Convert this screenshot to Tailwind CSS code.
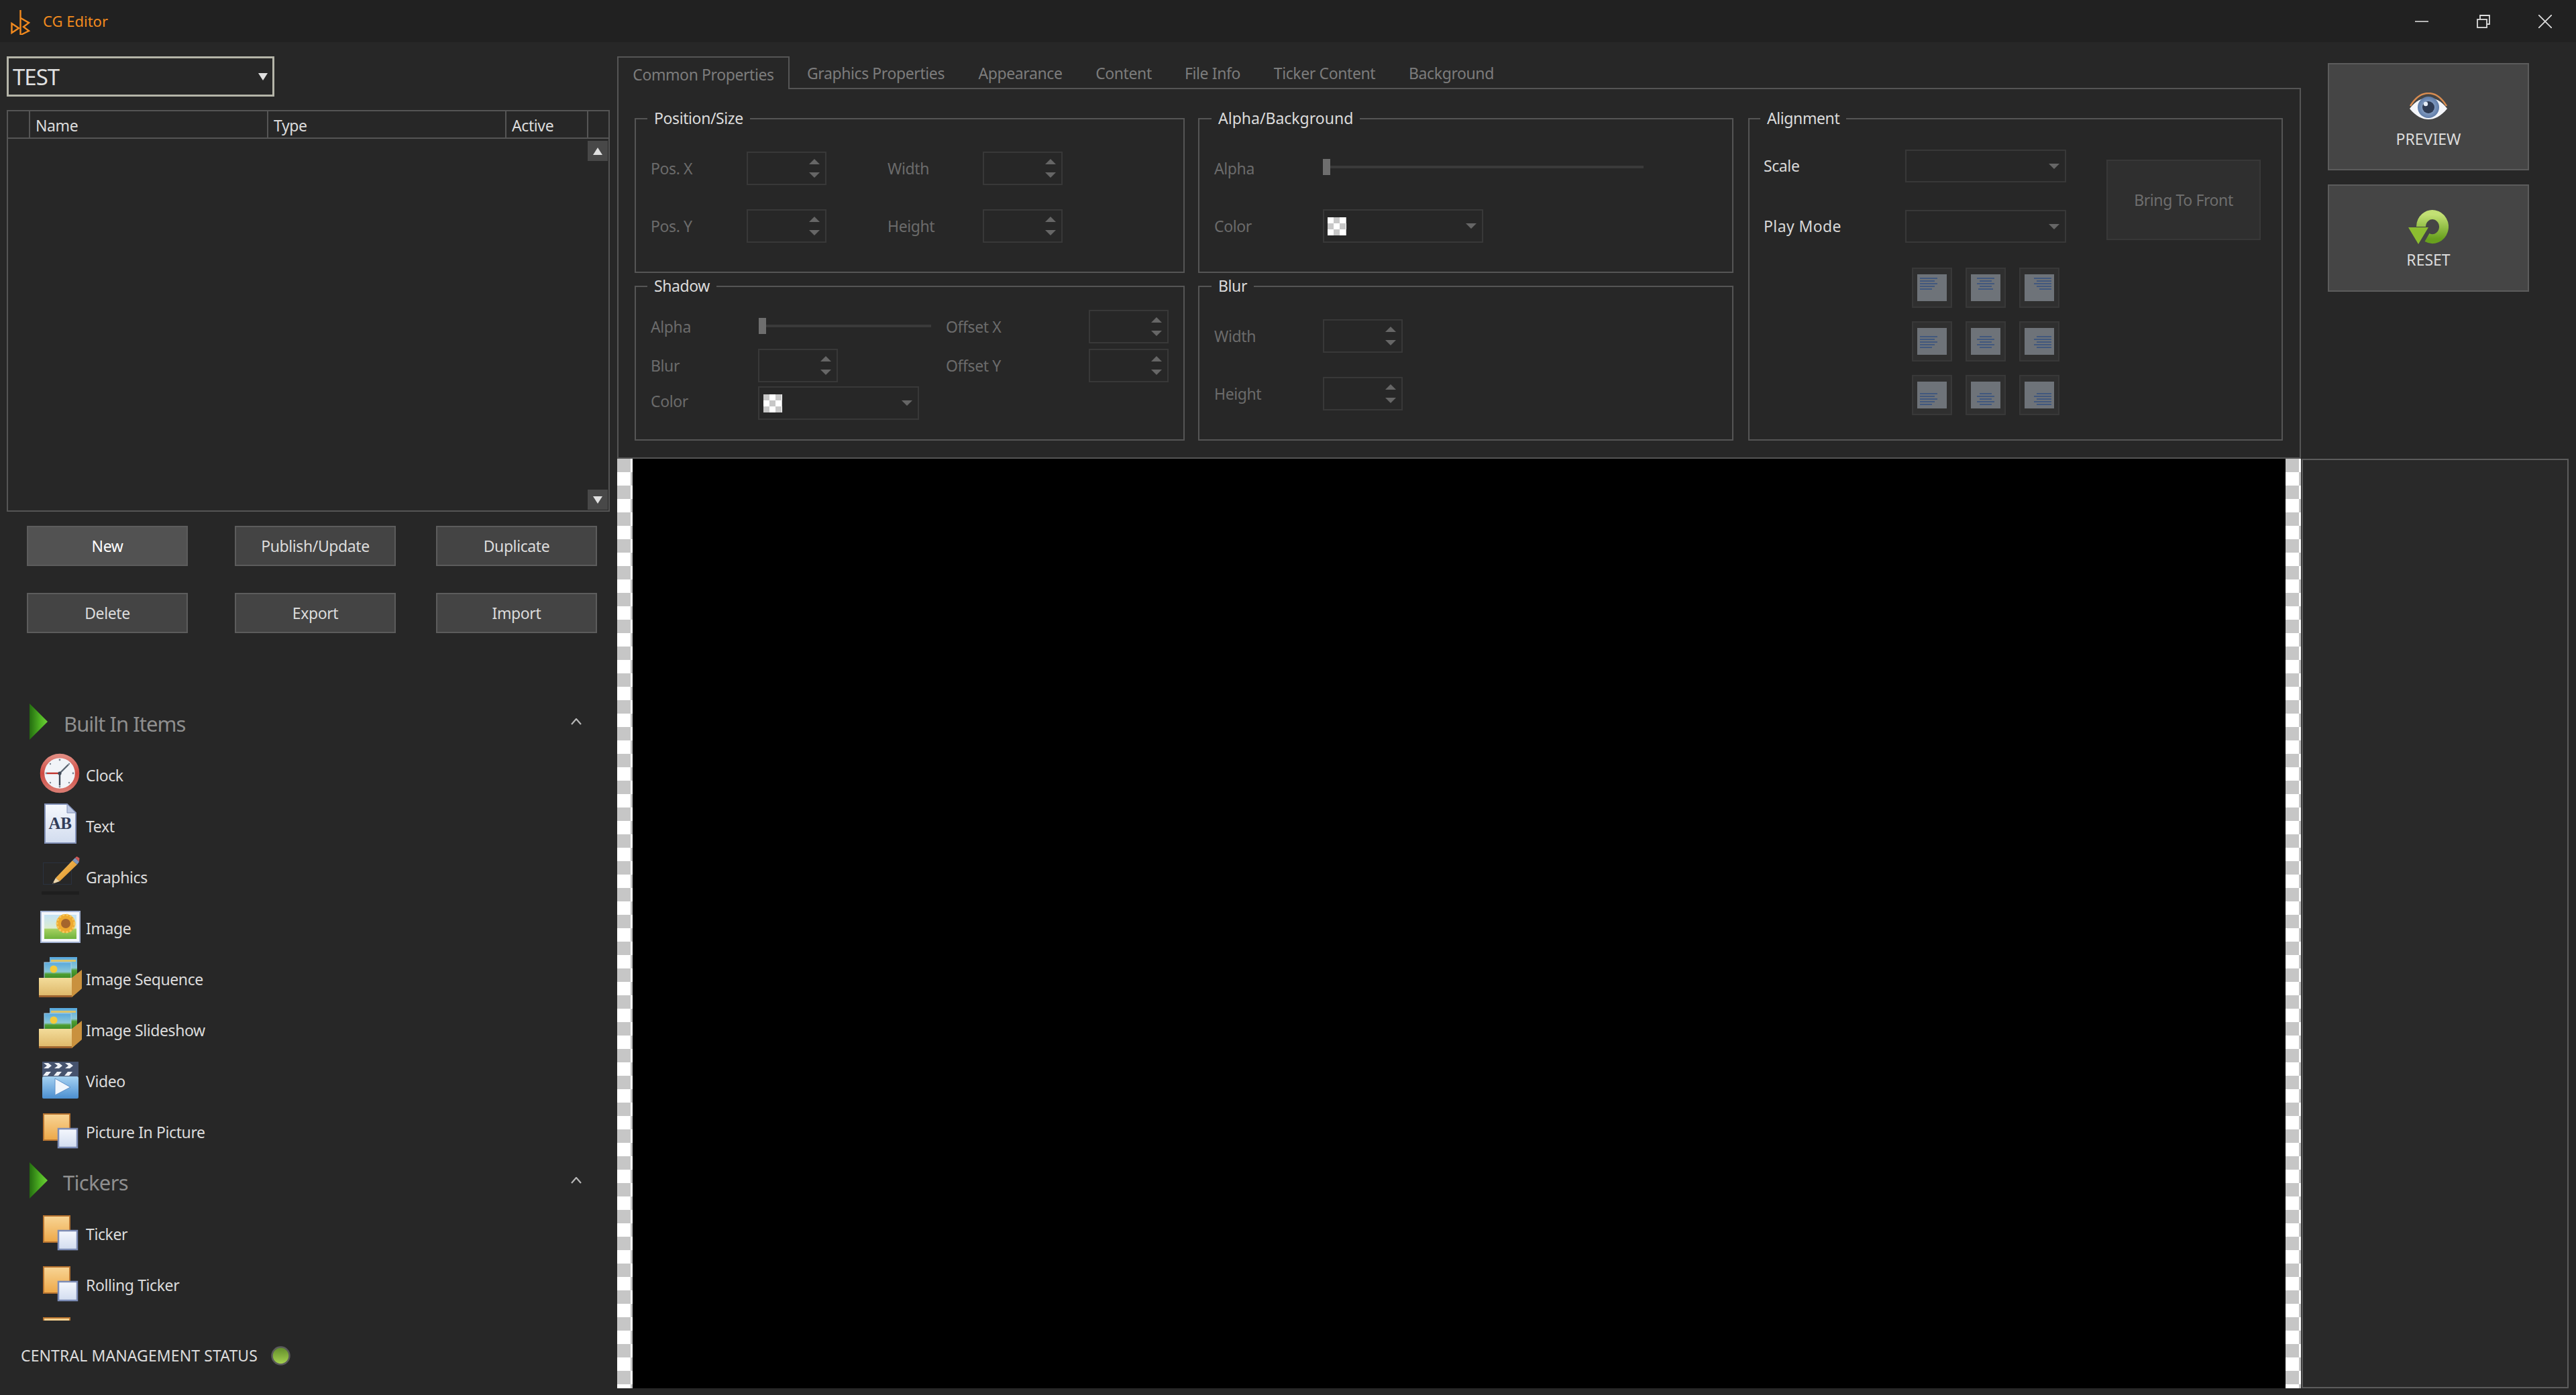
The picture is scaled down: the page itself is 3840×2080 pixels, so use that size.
<!DOCTYPE html>
<html lang="en">
<head>
<meta charset="utf-8">
<title>CG Editor</title>
<script src="https://cdn.jsdelivr.net/npm/@tailwindcss/browser@4"></script>
</head>
<body class="bg-[#272727]">
<svg class="absolute w-0 h-0" aria-hidden="true">
  <defs>
    <linearGradient id="gTri" x1="0" y1="0" x2="1" y2="0"><stop offset="0" stop-color="#246c10"/><stop offset="0.6" stop-color="#4fb423"/><stop offset="1" stop-color="#6ed038"/></linearGradient>
    <linearGradient id="gOrange" x1="0" y1="0" x2="0" y2="1"><stop offset="0" stop-color="#f8d596"/><stop offset="1" stop-color="#eda848"/></linearGradient>
    <linearGradient id="gPaper" x1="0" y1="0" x2="0" y2="1"><stop offset="0" stop-color="#f5f8fd"/><stop offset="1" stop-color="#d2dcef"/></linearGradient>
    <linearGradient id="gSky" x1="0" y1="0" x2="0" y2="1"><stop offset="0" stop-color="#c4e2f5"/><stop offset="0.55" stop-color="#dcecd0"/><stop offset="0.6" stop-color="#a4d060"/><stop offset="1" stop-color="#6fb23c"/></linearGradient>
    <linearGradient id="gTray" x1="0" y1="0" x2="0" y2="1"><stop offset="0" stop-color="#f3dc9a"/><stop offset="1" stop-color="#dcb566"/></linearGradient>
    <linearGradient id="gPhoto" x1="0" y1="0" x2="0" y2="1"><stop offset="0" stop-color="#58a8dc"/><stop offset="0.5" stop-color="#8cc8d8"/><stop offset="0.62" stop-color="#4f9e32"/><stop offset="1" stop-color="#2e7e22"/></linearGradient>
    <linearGradient id="gVideo" x1="0" y1="0" x2="0" y2="1"><stop offset="0" stop-color="#a6d2f2"/><stop offset="1" stop-color="#4b8fd0"/></linearGradient>
    <linearGradient id="gReset" x1="0" y1="0" x2="0" y2="1"><stop offset="0" stop-color="#c2e074"/><stop offset="1" stop-color="#68a01e"/></linearGradient>
    <linearGradient id="gLed" x1="0" y1="0" x2="0" y2="1"><stop offset="0" stop-color="#5f8a2a"/><stop offset="1" stop-color="#a8d450"/></linearGradient>
    <linearGradient id="gPencil" x1="0" y1="0" x2="1" y2="1"><stop offset="0" stop-color="#f7c860"/><stop offset="1" stop-color="#dd8a24"/></linearGradient>
    <linearGradient id="gRing" x1="0" y1="0" x2="0" y2="1"><stop offset="0" stop-color="#e08a80"/><stop offset="0.5" stop-color="#cf4a42"/><stop offset="1" stop-color="#d97a70"/></linearGradient>
    <radialGradient id="gIris"><stop offset="0" stop-color="#a9bedb"/><stop offset="1" stop-color="#5f7ca8"/></radialGradient>
    <g id="tri"><path d="M0 0 27 27 0 54Z" fill="url(#gTri)"/></g>
    <g id="pip">
      <rect x="7" y="5" width="39" height="39" fill="url(#gOrange)" stroke="#b87430" stroke-width="2"/>
      <rect x="29" y="27" width="28" height="28" fill="url(#gPaper)" stroke="#7c8cb6" stroke-width="2.5"/>
    </g>
    <g id="seq">
      <rect x="16" y="-1" width="41" height="32" fill="url(#gPhoto)"/>
      <rect x="18" y="3" width="37" height="3" fill="#d9c46c"/>
      <rect x="8" y="7" width="40" height="28" fill="url(#gPhoto)" stroke="#a8cfe6" stroke-width="1"/>
      <circle cx="22" cy="17" r="5.5" fill="#f4cb3c"/>
      <path d="M49 30 64 18V46L49 59Z" fill="#c9913e"/>
      <rect x="0" y="30" width="49" height="29" fill="url(#gTray)"/>
      <rect x="0" y="56" width="49" height="3" fill="#9c622e"/>
    </g>
    <g id="chev"><path d="M1 9 8 1 15 9" fill="none" stroke="#b8b8b8" stroke-width="2.2"/></g>
    <g id="sUp"><path d="M8 0 16 8H0Z" fill="#666"/></g>
    <g id="sDown"><path d="M8 8 16 0H0Z" fill="#666"/></g>
  </defs>
</svg>

<div class="flex flex-col w-[3840px] h-[2080px] overflow-hidden font-['Noto_Sans',sans-serif] text-[23px] text-[#dcdcdc] bg-[#272727]">

  <!-- title bar -->
  <header class="flex items-center h-[63px] shrink-0 bg-[#212121] pl-[10px] pr-[36px]">
    <svg class="w-[44px] h-[40px]" viewBox="0 0 44 40" fill="none" stroke="#f28a1e" stroke-width="2.4">
      <path d="M7.5 23V37L18 30Z"/>
      <path d="M20.5 3V40"/>
      <path d="M21 15 33 22 25 28 33 34 21 40"/>
    </svg>
    <span class="ml-[10px] text-[#f28a1e] text-[22px]">CG Editor</span>
    <div class="ml-auto flex gap-[72px]">
      <svg class="w-5 h-5" viewBox="0 0 20 20" fill="none" stroke="#dcdcdc" stroke-width="1.6"><path d="M0 10H20"/></svg>
      <svg class="w-5 h-5" viewBox="0 0 20 20" fill="none" stroke="#dcdcdc" stroke-width="1.8"><rect x="1" y="7" width="14" height="12"/><path d="M5 7V1H19V14H15"/></svg>
      <svg class="w-5 h-5" viewBox="0 0 20 20" fill="none" stroke="#dcdcdc" stroke-width="1.8"><path d="M0 0 20 20M20 0 0 20"/></svg>
    </div>
  </header>

  <div class="flex flex-1 min-h-0">
    <!-- sidebar -->
    <aside class="w-[920px] shrink-0 flex flex-col pt-[21px]">
      <div class="ml-[10px] w-[399px] h-[60px] shrink-0 border-[3px] border-[#b4b4a8] flex items-center justify-between pl-[6px] pr-[7px]">
        <span class="text-[33px] leading-none text-[#e0e0e0] tracking-[-1px]">TEST</span>
        <svg class="w-[14px] h-[11px]" viewBox="0 0 14 11"><path d="M0 0H14L7 11Z" fill="#e0e0e0"/></svg>
      </div>

      <div class="ml-[10px] mt-[20px] w-[899px] h-[599px] shrink-0 border-2 border-[#555] flex flex-col">
        <div class="flex h-[41px] border-b-2 border-[#555] shrink-0 text-[23px] leading-none tracking-[-0.4px]">
          <div class="w-[33px] border-r-2 border-[#555]"></div>
          <div class="w-[355px] border-r-2 border-[#555] pl-[8px] pt-[3px] flex items-center">Name</div>
          <div class="w-[355px] border-r-2 border-[#555] pl-[8px] pt-[3px] flex items-center">Type</div>
          <div class="w-[122px] border-r-2 border-[#555] pl-[8px] pt-[3px] flex items-center">Active</div>
        </div>
        <div class="flex-1 flex flex-col justify-between items-end pt-[3px] pb-[1px] pr-[1px]">
          <div class="w-[30px] h-[30px] bg-[#484848] flex items-center justify-center"><svg class="w-[14px] h-[11px]" viewBox="0 0 14 11"><path d="M0 11H14L7 0Z" fill="#e0e0e0"/></svg></div>
          <div class="w-[30px] h-[30px] bg-[#484848] flex items-center justify-center"><svg class="w-[14px] h-[11px]" viewBox="0 0 14 11"><path d="M0 0H14L7 11Z" fill="#e0e0e0"/></svg></div>
        </div>
      </div>

      <div class="mt-[21px] ml-[40px] shrink-0 grid grid-cols-[310px_300px_240px] grid-rows-[60px_60px] gap-y-[40px] tracking-[-0.4px]">
        <button class="w-[240px] bg-[#525252] border-2 border-[#5c5c5c] text-white">New</button>
        <button class="w-[240px] bg-[#444] border-2 border-[#5c5c5c]">Publish/Update</button>
        <button class="w-[240px] bg-[#444] border-2 border-[#5c5c5c]">Duplicate</button>
        <button class="w-[240px] bg-[#444] border-2 border-[#5c5c5c]">Delete</button>
        <button class="w-[240px] bg-[#444] border-2 border-[#5c5c5c]">Export</button>
        <button class="w-[240px] bg-[#444] border-2 border-[#5c5c5c]">Import</button>
      </div>

      <div class="mt-[105px] h-[920px] shrink-0 overflow-hidden tracking-[-0.4px]">
        <div class="h-[54px] flex items-center pl-[44px] pr-[53px]">
          <svg class="w-[27px] h-[54px]" viewBox="0 0 27 54"><use href="#tri"/></svg>
          <span class="ml-[24px] mt-[6px] text-[#8f8f8f] text-[31px] leading-none tracking-[-1px]">Built In Items</span>
          <svg class="ml-auto w-4 h-[10px]" viewBox="0 0 16 10"><use href="#chev"/></svg>
        </div>
        <div class="mt-[15px]">
          <div class="h-[76px] flex items-center pl-[58px] gap-[6px]">
            <svg class="w-16 h-16 overflow-visible" viewBox="0 0 64 64">
              <circle cx="31" cy="29" r="26" fill="#f1f4f8" stroke="url(#gRing)" stroke-width="6.5"/>
              <g fill="#7d8794"><circle cx="31" cy="9" r="1.4"/><circle cx="31" cy="49" r="1.4"/><circle cx="51" cy="29" r="1.4"/><circle cx="11" cy="29" r="1.4"/><circle cx="17" cy="15" r="1.2"/><circle cx="45" cy="43" r="1.2"/><circle cx="17" cy="43" r="1.2"/><circle cx="45" cy="15" r="1.2"/></g>
              <path d="M31 29 44 16" stroke="#5c6672" stroke-width="2.4"/>
              <path d="M31 29V47" stroke="#3f4957" stroke-width="2.4"/>
              <path d="M31 29H12" stroke="#c0342e" stroke-width="2.4"/>
              <circle cx="31" cy="29" r="2.6" fill="#3f4957"/>
            </svg>
            <span>Clock</span>
          </div>
          <div class="h-[76px] flex items-center pl-[58px] gap-[6px]">
            <svg class="w-16 h-16 overflow-visible" viewBox="0 0 64 64">
              <path d="M9 -1H42L55 12V57H9Z" fill="url(#gPaper)" stroke="#8291b8" stroke-width="2"/>
              <path d="M42 -1V12H55Z" fill="#bcc8e2" stroke="#8291b8" stroke-width="1"/>
              <text x="31.5" y="36" text-anchor="middle" font-family="Liberation Serif, serif" font-weight="700" font-size="25" fill="#323c58">AB</text>
            </svg>
            <span>Text</span>
          </div>
          <div class="h-[76px] flex items-center pl-[58px] gap-[6px]">
            <svg class="w-16 h-16 overflow-visible" viewBox="0 0 64 64">
              <rect x="6.5" y="10.5" width="42" height="32" fill="none" stroke="#2a3240" stroke-width="1"/>
              <rect x="4" y="53" width="56" height="5" fill="#1e1e1e"/>
              <path d="M25 33 50 7 57 13 31 38Z" fill="url(#gPencil)"/>
              <path d="M50 7 54 3 60 9 57 13Z" fill="#7f96ba"/>
              <path d="M54 3 56.5 1 60.5 3.5 60 9Z" fill="#cf5a58"/>
              <path d="M25 33 31 38 20 42Z" fill="#ecd6ac"/>
              <path d="M21.5 39.5 20 42 23 41Z" fill="#3a3a3a"/>
            </svg>
            <span>Graphics</span>
          </div>
          <div class="h-[76px] flex items-center pl-[58px] gap-[6px]">
            <svg class="w-16 h-16 overflow-visible" viewBox="0 0 64 64">
              <rect x="3" y="7" width="58" height="46" fill="#f4f7fc" stroke="#a4b4d4" stroke-width="2"/>
              <rect x="8" y="12" width="48" height="36" fill="url(#gSky)"/>
              <g fill="#eeaa30"><circle cx="40" cy="25" r="14"/></g>
              <g fill="none" stroke="#f6c85c" stroke-width="3" stroke-dasharray="3 2.6"><circle cx="40" cy="25" r="13"/></g>
              <circle cx="40" cy="25" r="7" fill="#a5652c"/>
            </svg>
            <span>Image</span>
          </div>
          <div class="h-[76px] flex items-center pl-[58px] gap-[6px]">
            <svg class="w-16 h-16 overflow-visible" viewBox="0 0 64 64"><use href="#seq"/></svg>
            <span>Image Sequence</span>
          </div>
          <div class="h-[76px] flex items-center pl-[58px] gap-[6px]">
            <svg class="w-16 h-16 overflow-visible" viewBox="0 0 64 64"><use href="#seq"/></svg>
            <span>Image Slideshow</span>
          </div>
          <div class="h-[76px] flex items-center pl-[58px] gap-[6px]">
            <svg class="w-16 h-16 overflow-visible" viewBox="0 0 64 64">
              <rect x="5" y="3" width="54" height="22" fill="#46536e"/>
              <path d="M7 5H14L19 9 14 13H7L12 9ZM23 5H30L35 9 30 13H23L28 9ZM39 5H46L51 9 46 13H39L44 9ZM6 24 11 18 H18L13 24ZM22 24 27 18H34L29 24ZM38 24 43 18H50L45 24Z" fill="#eef1f6"/>
              <rect x="5" y="25" width="54" height="33" rx="2" fill="url(#gVideo)"/>
              <path d="M24 28 47 41 24 53Z" fill="#f0f6fc" stroke="#5e90c8" stroke-width="1"/>
            </svg>
            <span>Video</span>
          </div>
          <div class="h-[76px] flex items-center pl-[58px] gap-[6px]">
            <svg class="w-16 h-16 overflow-visible" viewBox="0 0 64 64"><use href="#pip"/></svg>
            <span>Picture In Picture</span>
          </div>
        </div>
        <div class="mt-[7px] h-[54px] flex items-center pl-[44px] pr-[53px]">
          <svg class="w-[27px] h-[54px]" viewBox="0 0 27 54"><use href="#tri"/></svg>
          <span class="ml-[23px] mt-[6px] text-[#8f8f8f] text-[31px] leading-none tracking-[-0.7px]">Tickers</span>
          <svg class="ml-auto w-4 h-[10px]" viewBox="0 0 16 10"><use href="#chev"/></svg>
        </div>
        <div class="mt-[15px]">
          <div class="h-[76px] flex items-center pl-[58px] gap-[6px]">
            <svg class="w-16 h-16 overflow-visible" viewBox="0 0 64 64"><use href="#pip"/></svg>
            <span>Ticker</span>
          </div>
          <div class="h-[76px] flex items-center pl-[58px] gap-[6px]">
            <svg class="w-16 h-16 overflow-visible" viewBox="0 0 64 64"><use href="#pip"/></svg>
            <span>Rolling Ticker</span>
          </div>
          <div class="h-[76px] flex items-center pl-[58px] gap-[6px]">
            <svg class="w-16 h-16 overflow-visible" viewBox="0 0 64 64"><use href="#pip"/></svg>
          </div>
        </div>
      </div>

      <div class="mt-[38px] pl-[31px] flex items-center h-[28px] shrink-0 tracking-[0.1px]">
        <span class="w-[373px] whitespace-nowrap">CENTRAL MANAGEMENT STATUS</span>
        <svg class="w-[29px] h-[29px]" viewBox="0 0 29 29"><circle cx="14.5" cy="14.5" r="13" fill="url(#gLed)" stroke="#5a5a5a" stroke-width="2.5"/></svg>
      </div>
    </aside>

    <!-- main -->
    <main class="flex-1 flex flex-col min-w-0">
      <div class="flex h-[621px] shrink-0">
        <!-- tabs -->
        <section class="w-[2510px] shrink-0 pt-[21px] flex flex-col">
          <div class="flex h-[49px] shrink-0 text-[#7c7c7c] leading-none tracking-[-0.4px]">
            <div class="w-[257px] pt-[4px] border-2 border-b-0 border-[#555] flex items-center justify-center">Common Properties</div>
            <div class="w-[257px] pt-[4px] border-b-2 border-[#555] flex items-center justify-center">Graphics Properties</div>
            <div class="w-[174px] pt-[4px] border-b-2 border-[#555] flex items-center justify-center">Appearance</div>
            <div class="w-[134px] pt-[4px] border-b-2 border-[#555] flex items-center justify-center">Content</div>
            <div class="w-[131px] pt-[4px] border-b-2 border-[#555] flex items-center justify-center">File Info</div>
            <div class="w-[203px] pt-[4px] border-b-2 border-[#555] flex items-center justify-center">Ticker Content</div>
            <div class="w-[175px] pt-[4px] border-b-2 border-[#555] flex items-center justify-center">Background</div>
            <div class="flex-1 border-b-2 border-[#555]"></div>
          </div>
          <div class="flex-1 border-2 border-t-0 border-[#555] pl-[24px] pt-[43px] tracking-[-0.4px]">
            <div class="grid grid-cols-[840px_820px_797px] grid-rows-[231px_231px] gap-y-[19px]">

              <!-- Position/Size -->
              <div class="relative w-[820px] border-2 border-[#555] pl-[22px] pt-[48px] text-[#6b6b6b]">
                <span class="absolute left-[17px] -top-[20px] px-[10px] bg-[#272727] text-[#dcdcdc] leading-[36px]">Position/Size</span>
                <div class="flex items-center h-[50px]">
                  <span class="w-[143px]">Pos. X</span>
                  <div class="w-[119px] h-[50px] border-2 border-[#383838] flex flex-col items-end justify-center gap-[12px] pr-[8px]"><svg class="w-4 h-2" viewBox="0 0 16 8"><use href="#sUp"/></svg><svg class="w-4 h-2" viewBox="0 0 16 8"><use href="#sDown"/></svg></div>
                  <span class="ml-[91px] w-[142px]">Width</span>
                  <div class="w-[119px] h-[50px] border-2 border-[#383838] flex flex-col items-end justify-center gap-[12px] pr-[8px]"><svg class="w-4 h-2" viewBox="0 0 16 8"><use href="#sUp"/></svg><svg class="w-4 h-2" viewBox="0 0 16 8"><use href="#sDown"/></svg></div>
                </div>
                <div class="flex items-center h-[50px] mt-[36px]">
                  <span class="w-[143px]">Pos. Y</span>
                  <div class="w-[119px] h-[50px] border-2 border-[#383838] flex flex-col items-end justify-center gap-[12px] pr-[8px]"><svg class="w-4 h-2" viewBox="0 0 16 8"><use href="#sUp"/></svg><svg class="w-4 h-2" viewBox="0 0 16 8"><use href="#sDown"/></svg></div>
                  <span class="ml-[91px] w-[142px]">Height</span>
                  <div class="w-[119px] h-[50px] border-2 border-[#383838] flex flex-col items-end justify-center gap-[12px] pr-[8px]"><svg class="w-4 h-2" viewBox="0 0 16 8"><use href="#sUp"/></svg><svg class="w-4 h-2" viewBox="0 0 16 8"><use href="#sDown"/></svg></div>
                </div>
              </div>

              <!-- Alpha/Background -->
              <div class="relative w-[798px] border-2 border-[#555] pl-[22px] pt-[48px] text-[#6b6b6b]">
                <span class="absolute left-[18px] -top-[20px] px-[10px] bg-[#272727] text-[#dcdcdc] leading-[36px] tracking-[0px]">Alpha/Background</span>
                <div class="flex items-center h-[50px]">
                  <span class="w-[162px]">Alpha</span>
                  <div class="relative w-[478px] h-[24px] -mt-[4px] flex items-center"><div class="w-full h-1 bg-[#3a3a3a]"></div><div class="absolute left-0 top-0 w-[11px] h-[24px] bg-[#6e6e6e]"></div></div>
                </div>
                <div class="flex items-center h-[50px] mt-[36px]">
                  <span class="w-[162px]">Color</span>
                  <div class="w-[239px] h-[50px] border-2 border-[#383838] flex items-center justify-between pl-[5px] pr-[8px]">
                    <div class="w-[28px] h-[27px] bg-[conic-gradient(#c8c8c8_25%,#fff_0_50%,#c8c8c8_0_75%,#fff_0)] bg-size-[18px_18px]"></div>
                    <svg class="w-4 h-2" viewBox="0 0 16 8"><use href="#sDown"/></svg>
                  </div>
                </div>
              </div>

              <!-- Alignment -->
              <div class="relative row-span-2 border-2 border-[#555] pl-[21px] pt-[45px]">
                <span class="absolute left-[16px] -top-[20px] px-[10px] bg-[#272727] text-[#dcdcdc] leading-[36px]">Alignment</span>
                <div class="flex">
                  <div class="w-[451px] text-[#d8d8d8]">
                    <div class="flex items-center h-[49px]">
                      <span class="w-[211px]">Scale</span>
                      <div class="w-[240px] h-[49px] border-2 border-[#383838] flex items-center justify-end pr-[8px]"><svg class="w-4 h-2" viewBox="0 0 16 8"><use href="#sDown"/></svg></div>
                    </div>
                    <div class="flex items-center h-[49px] mt-[41px]">
                      <span class="w-[211px] tracking-[0.4px]">Play Mode</span>
                      <div class="w-[240px] h-[49px] border-2 border-[#383838] flex items-center justify-end pr-[8px]"><svg class="w-4 h-2" viewBox="0 0 16 8"><use href="#sDown"/></svg></div>
                    </div>
                  </div>
                  <button class="ml-[60px] mt-[15px] w-[230px] h-[120px] bg-[#2f2f2f] border-2 border-[#383838] text-[#6e6e6e]">Bring To Front</button>
                </div>
                <div class="mt-[37px] ml-[221px] grid grid-cols-[60px_60px_60px] grid-rows-[60px_60px_60px] gap-[20px]">
                  <div class="bg-[#2f2f2f] border-2 border-[#383838] flex items-center justify-center"><svg class="w-[44px] h-[40px]" viewBox="0 0 44 40"><rect width="44" height="40" fill="#6e7379"/><path d="M4 6H30M4 10H26M4 14H30M4 18H26M4 22H22" stroke="#41587e" stroke-width="2"/></svg></div>
                  <div class="bg-[#2f2f2f] border-2 border-[#383838] flex items-center justify-center"><svg class="w-[44px] h-[40px]" viewBox="0 0 44 40"><rect width="44" height="40" fill="#6e7379"/><path d="M9 6H35M13 10H31M9 14H35M13 18H31M11 22H33" stroke="#41587e" stroke-width="2"/></svg></div>
                  <div class="bg-[#2f2f2f] border-2 border-[#383838] flex items-center justify-center"><svg class="w-[44px] h-[40px]" viewBox="0 0 44 40"><rect width="44" height="40" fill="#6e7379"/><path d="M14 6H40M18 10H40M14 14H40M18 18H40M22 22H40" stroke="#41587e" stroke-width="2"/></svg></div>
                  <div class="bg-[#2f2f2f] border-2 border-[#383838] flex items-center justify-center"><svg class="w-[44px] h-[40px]" viewBox="0 0 44 40"><rect width="44" height="40" fill="#6e7379"/><path d="M4 13H30M4 17H26M4 21H30M4 25H26M4 29H22" stroke="#41587e" stroke-width="2"/></svg></div>
                  <div class="bg-[#2f2f2f] border-2 border-[#383838] flex items-center justify-center"><svg class="w-[44px] h-[40px]" viewBox="0 0 44 40"><rect width="44" height="40" fill="#6e7379"/><path d="M13 13H31M9 17H35M13 21H31M9 25H35M13 29H31" stroke="#41587e" stroke-width="2"/></svg></div>
                  <div class="bg-[#2f2f2f] border-2 border-[#383838] flex items-center justify-center"><svg class="w-[44px] h-[40px]" viewBox="0 0 44 40"><rect width="44" height="40" fill="#6e7379"/><path d="M18 13H40M14 17H40M18 21H40M14 25H40M18 29H40" stroke="#41587e" stroke-width="2"/></svg></div>
                  <div class="bg-[#2f2f2f] border-2 border-[#383838] flex items-center justify-center"><svg class="w-[44px] h-[40px]" viewBox="0 0 44 40"><rect width="44" height="40" fill="#6e7379"/><path d="M4 18H30M4 22H26M4 26H30M4 30H26M4 34H22" stroke="#41587e" stroke-width="2"/></svg></div>
                  <div class="bg-[#2f2f2f] border-2 border-[#383838] flex items-center justify-center"><svg class="w-[44px] h-[40px]" viewBox="0 0 44 40"><rect width="44" height="40" fill="#6e7379"/><path d="M13 18H31M9 22H35M13 26H31M9 30H35M13 34H31" stroke="#41587e" stroke-width="2"/></svg></div>
                  <div class="bg-[#2f2f2f] border-2 border-[#383838] flex items-center justify-center"><svg class="w-[44px] h-[40px]" viewBox="0 0 44 40"><rect width="44" height="40" fill="#6e7379"/><path d="M18 18H40M14 22H40M18 26H40M14 30H40M18 34H40" stroke="#41587e" stroke-width="2"/></svg></div>
                </div>
              </div>

              <!-- Shadow -->
              <div class="relative w-[820px] border-2 border-[#555] pl-[22px] pt-[34px] text-[#6b6b6b]">
                <span class="absolute left-[17px] -top-[20px] px-[10px] bg-[#272727] text-[#dcdcdc] leading-[36px]">Shadow</span>
                <div class="flex items-center h-[50px]">
                  <span class="w-[161px]">Alpha</span>
                  <div class="relative w-[257px] h-[24px] -mt-[2px] flex items-center"><div class="w-full h-1 bg-[#3a3a3a]"></div><div class="absolute left-0 top-0 w-[11px] h-[24px] bg-[#6e6e6e]"></div></div>
                  <span class="ml-[22px] w-[213px]">Offset X</span>
                  <div class="w-[119px] h-[50px] border-2 border-[#383838] flex flex-col items-end justify-center gap-[12px] pr-[8px]"><svg class="w-4 h-2" viewBox="0 0 16 8"><use href="#sUp"/></svg><svg class="w-4 h-2" viewBox="0 0 16 8"><use href="#sDown"/></svg></div>
                </div>
                <div class="flex items-center h-[50px] mt-[8px]">
                  <span class="w-[160px]">Blur</span>
                  <div class="w-[119px] h-[50px] border-2 border-[#383838] flex flex-col items-end justify-center gap-[12px] pr-[8px]"><svg class="w-4 h-2" viewBox="0 0 16 8"><use href="#sUp"/></svg><svg class="w-4 h-2" viewBox="0 0 16 8"><use href="#sDown"/></svg></div>
                  <span class="ml-[161px] w-[213px]">Offset Y</span>
                  <div class="w-[119px] h-[50px] border-2 border-[#383838] flex flex-col items-end justify-center gap-[12px] pr-[8px]"><svg class="w-4 h-2" viewBox="0 0 16 8"><use href="#sUp"/></svg><svg class="w-4 h-2" viewBox="0 0 16 8"><use href="#sDown"/></svg></div>
                </div>
                <div class="flex items-center h-[50px] mt-[6px]">
                  <span class="w-[160px] -mt-[6px]">Color</span>
                  <div class="w-[240px] h-[50px] border-2 border-[#383838] flex items-center justify-between pl-[6px] pr-[8px]">
                    <div class="w-[28px] h-[27px] bg-[conic-gradient(#fff_25%,#c8c8c8_0_50%,#fff_0_75%,#c8c8c8_0)] bg-size-[18px_18px]"></div>
                    <svg class="w-4 h-2" viewBox="0 0 16 8"><use href="#sDown"/></svg>
                  </div>
                </div>
              </div>

              <!-- Blur -->
              <div class="relative w-[798px] border-2 border-[#555] pl-[22px] pt-[48px] text-[#6b6b6b]">
                <span class="absolute left-[18px] -top-[20px] px-[10px] bg-[#272727] text-[#dcdcdc] leading-[36px]">Blur</span>
                <div class="flex items-center h-[50px]">
                  <span class="w-[162px]">Width</span>
                  <div class="w-[119px] h-[50px] border-2 border-[#383838] flex flex-col items-end justify-center gap-[12px] pr-[8px]"><svg class="w-4 h-2" viewBox="0 0 16 8"><use href="#sUp"/></svg><svg class="w-4 h-2" viewBox="0 0 16 8"><use href="#sDown"/></svg></div>
                </div>
                <div class="flex items-center h-[50px] mt-[36px]">
                  <span class="w-[162px]">Height</span>
                  <div class="w-[119px] h-[50px] border-2 border-[#383838] flex flex-col items-end justify-center gap-[12px] pr-[8px]"><svg class="w-4 h-2" viewBox="0 0 16 8"><use href="#sUp"/></svg><svg class="w-4 h-2" viewBox="0 0 16 8"><use href="#sDown"/></svg></div>
                </div>
              </div>
            </div>
          </div>
        </section>

        <!-- preview / reset -->
        <div class="ml-[40px] pt-[31px] flex flex-col gap-[21px]">
          <button class="w-[300px] h-[160px] bg-[#454545] border-2 border-[#5c5c5c] flex flex-col items-center justify-start pt-[42px]">
            <svg class="w-[56px] h-[40px] shrink-0" viewBox="0 0 56 40">
              <path d="M0 24C10 11 19 8 28 8S46 11 56 24C46 36 37 40 28 40S10 36 0 24Z" fill="#f4f6fa"/>
              <path d="M1 20C10 5 20 1 28 1S46 5 55 20" fill="none" stroke="#d98c50" stroke-width="2.4"/>
              <circle cx="28" cy="22" r="16" fill="url(#gIris)"/>
              <circle cx="28" cy="22" r="9" fill="#2f3b52"/>
              <circle cx="24" cy="17" r="3.2" fill="#e6edf7"/>
            </svg>
            <span class="mt-[14px] leading-[30px]">PREVIEW</span>
          </button>
          <button class="w-[300px] h-[160px] bg-[#454545] border-2 border-[#5c5c5c] flex flex-col items-center justify-start pt-[35px]">
            <svg class="w-[60px] h-[52px] shrink-0" viewBox="0 0 60 52">
              <path d="M19 26A17 18 0 1 1 28 42" fill="none" stroke="url(#gReset)" stroke-width="14"/>
              <path d="M0 27H30L15 52Z" fill="#8cbd30"/>
            </svg>
            <span class="mt-[8px] leading-[30px]">RESET</span>
          </button>
        </div>
      </div>

      <!-- canvas row -->
      <div class="flex h-[1386px] shrink-0">
        <div class="w-[23px] bg-[conic-gradient(#fff_25%,#c6c6c6_0_50%,#fff_0_75%,#c6c6c6_0)] bg-size-[40px_40px]"></div>
        <div class="w-[2464px] bg-black"></div>
        <div class="w-[23px] bg-[conic-gradient(#fff_25%,#c6c6c6_0_50%,#fff_0_75%,#c6c6c6_0)] bg-size-[40px_40px]"></div>
        <div class="ml-px w-[398px] bg-[#292929] border-2 border-[#5c5c5c]"></div>
      </div>
    </main>
  </div>
</div>
</body>
</html>
